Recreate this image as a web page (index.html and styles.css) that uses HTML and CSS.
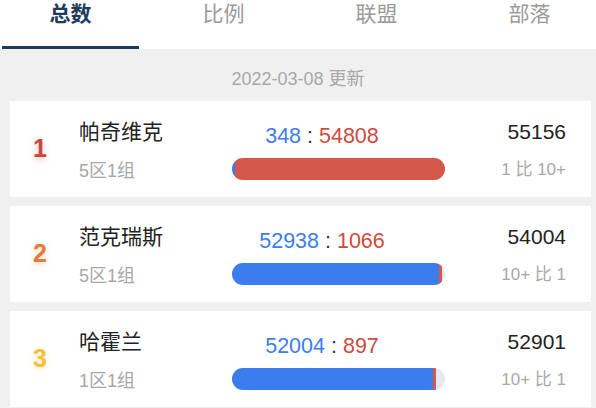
FILE: index.html
```html
<!DOCTYPE html>
<html lang="zh">
<head>
  <meta charset="UTF-8">
  <meta name="viewport" content="width=device-width, initial-scale=1.0">
  <title>排行</title>
  <link rel="stylesheet" href="styles.css">
</head>
<body>
  <div class="tabs">
    <div class="tab active">总数</div>
    <div class="tab">比例</div>
    <div class="tab">联盟</div>
    <div class="tab">部落</div>
  </div>

  <div class="date">2022-03-08 更新</div>

  <div class="list">
    <div class="card">
      <div class="rank rank-1">1</div>
      <div class="info">
        <div class="name">帕奇维克</div>
        <div class="sub">5区1组</div>
      </div>
      <div class="mid">
        <div class="score"><span class="blue">348</span> : <span class="red">54808</span></div>
        <div class="bar">
          <div class="seg-blue" style="width: 1.5%"></div>
          <div class="seg-red" style="width: 98.5%"></div>
        </div>
      </div>
      <div class="total">
        <div class="num">55156</div>
        <div class="sub">1 比 10+</div>
      </div>
    </div>

    <div class="card">
      <div class="rank rank-2">2</div>
      <div class="info">
        <div class="name">范克瑞斯</div>
        <div class="sub">5区1组</div>
      </div>
      <div class="mid">
        <div class="score"><span class="blue">52938</span> : <span class="red">1066</span></div>
        <div class="bar">
          <div class="seg-blue" style="width: 97%"></div>
          <div class="seg-red" style="width: 1.4%"></div>
        </div>
      </div>
      <div class="total">
        <div class="num">54004</div>
        <div class="sub">10+ 比 1</div>
      </div>
    </div>

    <div class="card">
      <div class="rank rank-3">3</div>
      <div class="info">
        <div class="name">哈霍兰</div>
        <div class="sub">1区1组</div>
      </div>
      <div class="mid">
        <div class="score"><span class="blue">52004</span> : <span class="red">897</span></div>
        <div class="bar">
          <div class="seg-blue" style="width: 94.5%"></div>
          <div class="seg-red" style="width: 1.5%"></div>
        </div>
      </div>
      <div class="total">
        <div class="num">52901</div>
        <div class="sub">10+ 比 1</div>
      </div>
    </div>
  </div>
</body>
</html>
```

FILE: styles.css
```css
html, body { margin: 0; padding: 0; }
body { font-family: "Liberation Sans", "Noto Sans CJK SC", sans-serif; background: #f0f0f0; overflow: hidden; width: 596px; height: 408px; }

.tabs { display: flex; background: #fff; height: 49px; margin-left: -6px; width: 612px; }
.tab { width: 137px; margin: 0 8px; height: 46px; line-height: 28px; text-align: center; font-size: 21px; color: #9a9a9a; border-bottom: 3px solid transparent; }
.tab.active { color: #1e3a5c; font-weight: bold; border-bottom-color: #1e3a5c; }

.date { text-align: center; font-size: 18px; color: #a8a8a8; line-height: 24px; padding: 18px 0 10px; }

.list { display: flex; flex-direction: column; gap: 9px; margin: 0 5px 0 10px; }
.card { display: flex; background: #fff; height: 96px; }

.rank { width: 60px; flex: none; display: flex; align-items: center; justify-content: center; font-size: 25px; font-weight: bold; padding-bottom: 2px; box-sizing: border-box; }
.rank-1 { color: #c8463d; text-shadow: 0 2px 6px rgba(200, 70, 61, 0.35); }
.rank-2 { color: #e27c38; text-shadow: 0 2px 6px rgba(226, 124, 56, 0.35); }
.rank-3 { color: #f2c23d; text-shadow: 0 2px 6px rgba(242, 194, 61, 0.4); }

.info { margin-left: 9px; width: 153px; flex: none; padding-top: 17px; }
.name { font-size: 21px; line-height: 28px; color: #222; }
.sub { font-size: 18px; line-height: 24px; color: #a8a8a8; margin-top: 13px; }

.mid { width: 213px; flex: none; padding-top: 21px; }
.score { font-size: 21.5px; line-height: 28px; color: #333; text-align: center; padding-right: 33px; }
.blue { color: #3b7ded; }
.red { color: #cf4a3e; }
.bar { display: flex; height: 22px; margin-top: 8px; border-radius: 11px; overflow: hidden; background: #e7e9f0; }
.seg-blue { background: #3b7ded; }
.seg-red { background: #d4584a; }

.total { flex: 1; text-align: right; padding: 17px 25px 0 0; }
.num { font-size: 21px; line-height: 28px; color: #222; }
.total .sub { font-size: 17px; margin-top: 12px; }
```
